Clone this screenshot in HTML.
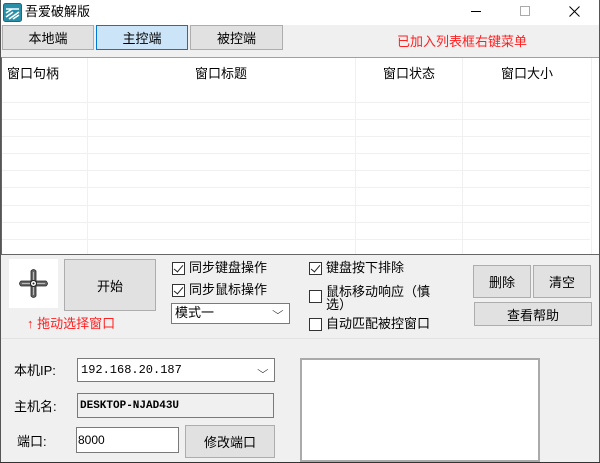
<!DOCTYPE html>
<html><head><meta charset="utf-8"><style>
*{margin:0;padding:0;box-sizing:border-box}
body{width:600px;height:463px;background:#f0f0f0;position:relative;overflow:hidden;font-family:"Liberation Sans","Noto Sans CJK SC",sans-serif;font-size:13px;color:#000}
.a{position:absolute}
.btn{position:absolute;background:#e1e1e1;border:1px solid #adadad;display:flex;align-items:center;justify-content:center;font-size:13px}
.t{position:absolute;white-space:nowrap;line-height:16px}
.cb{position:absolute;width:13px;height:13px;border:1px solid #333;background:#fff}
.cb.c::after{content:"";position:absolute;left:3px;top:0px;width:4px;height:8px;border:solid #222;border-width:0 1.5px 1.5px 0;transform:rotate(40deg)}
.hl{position:absolute;left:2px;width:588px;height:1px;background:#f0f0f0}
.vl{position:absolute;top:58px;width:1px;height:196px;background:#f0f0f0}
</style></head><body>
<div class="a" style="left:0;top:0;width:600px;height:25px;background:#fff"></div>
<svg class="a" style="left:3px;top:3px" width="19" height="19" viewBox="0 0 19 19"><rect x="0.5" y="0.5" width="18" height="18" rx="2" fill="#2a8fa8" stroke="#1a6a80"/><path d="M3 6h13M3 10l6-4M6 16l10-7M10 16l6-4M3 14l7-5" stroke="#fff" stroke-width="1.6" fill="none"/></svg>
<div class="t" style="left:25px;top:4px;font-size:13px">吾爱破解版</div>
<div class="a" style="left:471px;top:11px;width:10px;height:1px;background:#000"></div>
<div class="a" style="left:520px;top:6px;width:10px;height:10px;border:1px solid #aaa"></div>
<svg class="a" style="left:569px;top:6px" width="11" height="11" viewBox="0 0 11 11"><path d="M0.5 0.5L10.5 10.5M10.5 0.5L0.5 10.5" stroke="#000" stroke-width="1"/></svg>
<div class="a" style="left:0;top:0;width:1px;height:463px;background:#555"></div>
<div class="a" style="left:599px;top:0;width:1px;height:463px;background:#555"></div>
<div class="a" style="left:0;top:462px;width:600px;height:1px;background:#333"></div>

<div class="btn" style="left:2px;top:25px;width:92px;height:25px">本地端</div>
<div class="btn" style="left:96px;top:25px;width:92px;height:25px;background:#cce4f7;border-color:#0078d7">主控端</div>
<div class="btn" style="left:190px;top:25px;width:93px;height:25px">被控端</div>
<div class="t" style="left:397px;top:34px;color:#ff2020">已加入列表框右键菜单</div>

<div class="a" style="left:1px;top:57px;width:598px;height:198px;background:#fff;border-top:1px solid #a0a0a0;border-left:1px solid #666;border-bottom:1px solid #666"></div>
<div class="vl" style="left:87px"></div><div class="vl" style="left:355px"></div><div class="vl" style="left:462px"></div><div class="vl" style="left:591px"></div>
<div class="hl" style="top:102px"></div><div class="hl" style="top:119px"></div><div class="hl" style="top:136px"></div><div class="hl" style="top:153px"></div><div class="hl" style="top:170px"></div><div class="hl" style="top:187px"></div><div class="hl" style="top:205px"></div><div class="hl" style="top:222px"></div><div class="hl" style="top:239px"></div>
<div class="t" style="left:7px;top:66px">窗口句柄</div>
<div class="t" style="left:195px;top:66px">窗口标题</div>
<div class="t" style="left:383px;top:66px">窗口状态</div>
<div class="t" style="left:501px;top:66px">窗口大小</div>

<div class="a" style="left:9px;top:259px;width:49px;height:49px;background:#fff"></div>
<svg class="a" style="left:17px;top:267px" width="33" height="33" viewBox="0 0 33 33"><path d="M14 4q2.5-3 5 0v10h10q3 2.5 0 5h-10v10q-2.5 3-5 0v-10h-10q-3-2.5 0-5h10z" fill="#666" stroke="#222" stroke-width="0.8"/><path d="M16.5 5v8M16.5 20v8M5 16.5h8M20 16.5h8" stroke="#bbb" stroke-width="1"/><circle cx="16.5" cy="16.5" r="3" fill="#fff" stroke="#222"/><circle cx="16.5" cy="16.5" r="1" fill="#222"/></svg>
<div class="btn" style="left:64px;top:259px;width:92px;height:52px">开始</div>
<div class="t" style="left:27px;top:316px;color:#ff2020">↑ 拖动选择窗口</div>

<div class="cb c" style="left:172px;top:262px"></div><div class="t" style="left:189px;top:260px">同步键盘操作</div>
<div class="cb c" style="left:172px;top:284px"></div><div class="t" style="left:189px;top:282px">同步鼠标操作</div>
<div class="a" style="left:171px;top:303px;width:119px;height:21px;background:#fff;border:1px solid #7a7a7a"></div>
<div class="t" style="left:175px;top:305px">模式一</div>
<div class="t" style="left:274px;top:304px;font-size:10px;transform:scaleX(1.5)">⌵</div>

<div class="cb c" style="left:309px;top:262px"></div><div class="t" style="left:326px;top:260px">键盘按下排除</div>
<div class="cb" style="left:309px;top:290px"></div><div class="t" style="left:326px;top:285px;line-height:13px">鼠标移动响应（慎<br>选）</div>
<div class="cb" style="left:309px;top:318px"></div><div class="t" style="left:326px;top:316px">自动匹配被控窗口</div>

<div class="btn" style="left:473px;top:265px;width:58px;height:33px">删除</div>
<div class="btn" style="left:533px;top:265px;width:58px;height:33px">清空</div>
<div class="btn" style="left:474px;top:302px;width:118px;height:24px">查看帮助</div>

<div class="a" style="left:1px;top:338px;width:598px;height:1px;background:#e3e3e3"></div>

<div class="t" style="left:14px;top:363px">本机IP:</div>
<div class="a" style="left:77px;top:358px;width:198px;height:24px;background:#fff;border:1px solid #7a7a7a"></div>
<div class="t" style="left:81px;top:362px;font-family:'Liberation Mono',monospace;font-size:12px">192.168.20.187</div>
<div class="t" style="left:259px;top:363px;font-size:10px;transform:scaleX(1.5)">⌵</div>
<div class="t" style="left:14px;top:399px">主机名:</div>
<div class="a" style="left:77px;top:393px;width:197px;height:25px;background:#f0f0f0;border:1px solid #7a7a7a"></div>
<div class="t" style="left:80px;top:398px;font-family:'Liberation Mono',monospace;font-size:11px;font-weight:bold">DESKTOP-NJAD43U</div>
<div class="t" style="left:17px;top:434px">端口:</div>
<div class="a" style="left:76px;top:427px;width:103px;height:26px;background:#fff;border:1px solid #7a7a7a"></div>
<div class="t" style="left:78px;top:432px;font-size:12px">8000</div>
<div class="btn" style="left:185px;top:425px;width:90px;height:33px">修改端口</div>

<div class="a" style="left:300px;top:358px;width:240px;height:104px;background:#fff;border:2px solid #aaa"></div>
</body></html>
